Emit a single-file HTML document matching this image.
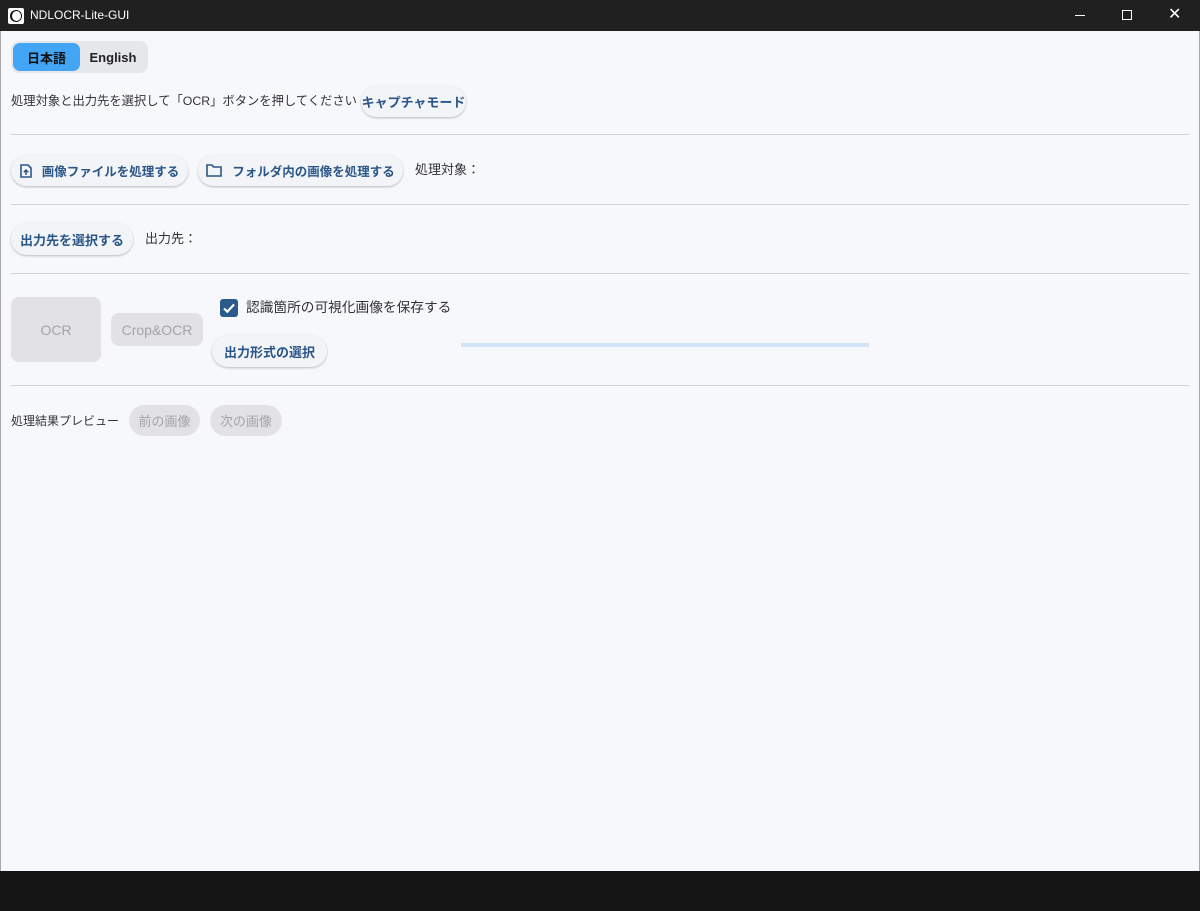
<!DOCTYPE html>
<html><head><meta charset="utf-8"><style>
*{margin:0;padding:0;box-sizing:border-box}
body{width:1200px;height:911px;background:#f7f8fc;font-family:"Liberation Sans","Noto Sans CJK JP",sans-serif;font-size:12px;color:#333;position:relative;overflow:hidden}
.a{position:absolute}
.title{left:0;top:0;width:1200px;height:31px;background:#202020;color:#fff;font-size:12px}
.bot{left:0;top:871px;width:1200px;height:40px;background:#141414}
.btn{position:absolute;background:#f2f4f8;border-radius:16px;box-shadow:0 1px 2px rgba(0,0,0,.25);color:#2b5688;font-weight:bold;font-size:13px;display:flex;align-items:center;justify-content:center;gap:10px}
.dis{position:absolute;background:#e2e2e4;color:#a4a4a6;font-size:13px;display:flex;align-items:center;justify-content:center;border-radius:16px}
.hr{position:absolute;left:11px;width:1178px;height:1px;background:#cfd0d4}
.t{position:absolute;line-height:16px}
</style></head><body>
<div class="a title">
 <div class="a" style="left:8px;top:8px;width:16px;height:16px;background:#fff;border-radius:2px"><div class="a" style="left:2px;top:2px;width:12px;height:12px;border-radius:50%;background:#111"></div><div class="a" style="left:4px;top:3px;width:9px;height:10px;border-radius:50%;background:#fff"></div></div>
 <div class="a" style="left:30px;top:8px">NDLOCR-Lite-GUI</div>
 <div class="a" style="left:1075px;top:15px;width:10px;height:1px;background:#fff"></div>
 <div class="a" style="left:1122px;top:10px;width:10px;height:10px;border:1px solid #fff"></div>
 <div class="a" style="left:1168px;top:8px;font-size:16px;line-height:14px">✕</div>
</div>
<div class="a" style="left:0;top:31px;width:1px;height:840px;background:#aaa"></div>
<div class="a" style="left:1199px;top:31px;width:1px;height:840px;background:#aaa"></div>

<div class="a" style="left:11px;top:41px;width:137px;height:32px;background:#e6e7eb;border-radius:8px"></div>
<div class="a" style="left:13px;top:43px;width:67px;height:28px;background:#42a5f5;border-radius:7px;display:flex;align-items:center;justify-content:center;color:#111;font-weight:bold;font-size:13px">日本語</div>
<div class="a" style="left:80px;top:43px;width:66px;height:28px;display:flex;align-items:center;justify-content:center;color:#222;font-weight:bold;font-size:13px">English</div>

<div class="t" style="left:11px;top:93px;font-size:12.3px">処理対象と出力先を選択して「OCR」ボタンを押してください</div>
<div class="btn" style="left:361px;top:86px;width:105px;height:31px">キャプチャモード</div>
<div class="hr" style="top:134px"></div>

<div class="btn" style="left:11px;top:155px;width:177px;height:31px;font-size:12.5px"><svg width="12" height="14" viewBox="0 0 12 14"><path d="M1 1h7l3 3v9H1z" fill="none" stroke="#2b5688" stroke-width="1.6"/><path d="M6 11V6M3.8 8.2L6 6l2.2 2.2" fill="none" stroke="#2b5688" stroke-width="1.5"/></svg>画像ファイルを処理する</div>
<div class="btn" style="left:198px;top:155px;width:205px;height:31px;font-size:12.5px"><svg width="16" height="13" viewBox="0 0 16 13"><path d="M1 1h5l1.5 2H15v9H1z" fill="none" stroke="#2b5688" stroke-width="1.6"/></svg>フォルダ内の画像を処理する</div>
<div class="t" style="left:415px;top:162px;font-size:13px">処理対象：</div>
<div class="hr" style="top:204px"></div>

<div class="btn" style="left:11px;top:223px;width:122px;height:32px">出力先を選択する</div>
<div class="t" style="left:145px;top:231px;font-size:13px">出力先：</div>
<div class="hr" style="top:273px"></div>

<div class="dis" style="left:11px;top:297px;width:90px;height:65px;border-radius:8px;font-size:14px">OCR</div>
<div class="dis" style="left:111px;top:313px;width:92px;height:33px;border-radius:8px;font-size:14px">Crop&amp;OCR</div>
<div class="a" style="left:220px;top:299px;width:18px;height:18px;background:#2c5a8a;border-radius:3px"><svg width="18" height="18" viewBox="0 0 18 18"><path d="M4 9.5l3.3 3.2L14 5.5" fill="none" stroke="#fff" stroke-width="2.2"/></svg></div>
<div class="t" style="left:246px;top:300px;font-size:13.7px">認識箇所の可視化画像を保存する</div>
<div class="btn" style="left:212px;top:335px;width:115px;height:32px">出力形式の選択</div>
<div class="a" style="left:461px;top:343px;width:408px;height:4px;background:#d4e3f5"></div>
<div class="hr" style="top:385px"></div>

<div class="t" style="left:11px;top:413px">処理結果プレビュー</div>
<div class="dis" style="left:129px;top:405px;width:71px;height:31px">前の画像</div>
<div class="dis" style="left:210px;top:405px;width:72px;height:31px">次の画像</div>

<div class="a bot"></div>
</body></html>
